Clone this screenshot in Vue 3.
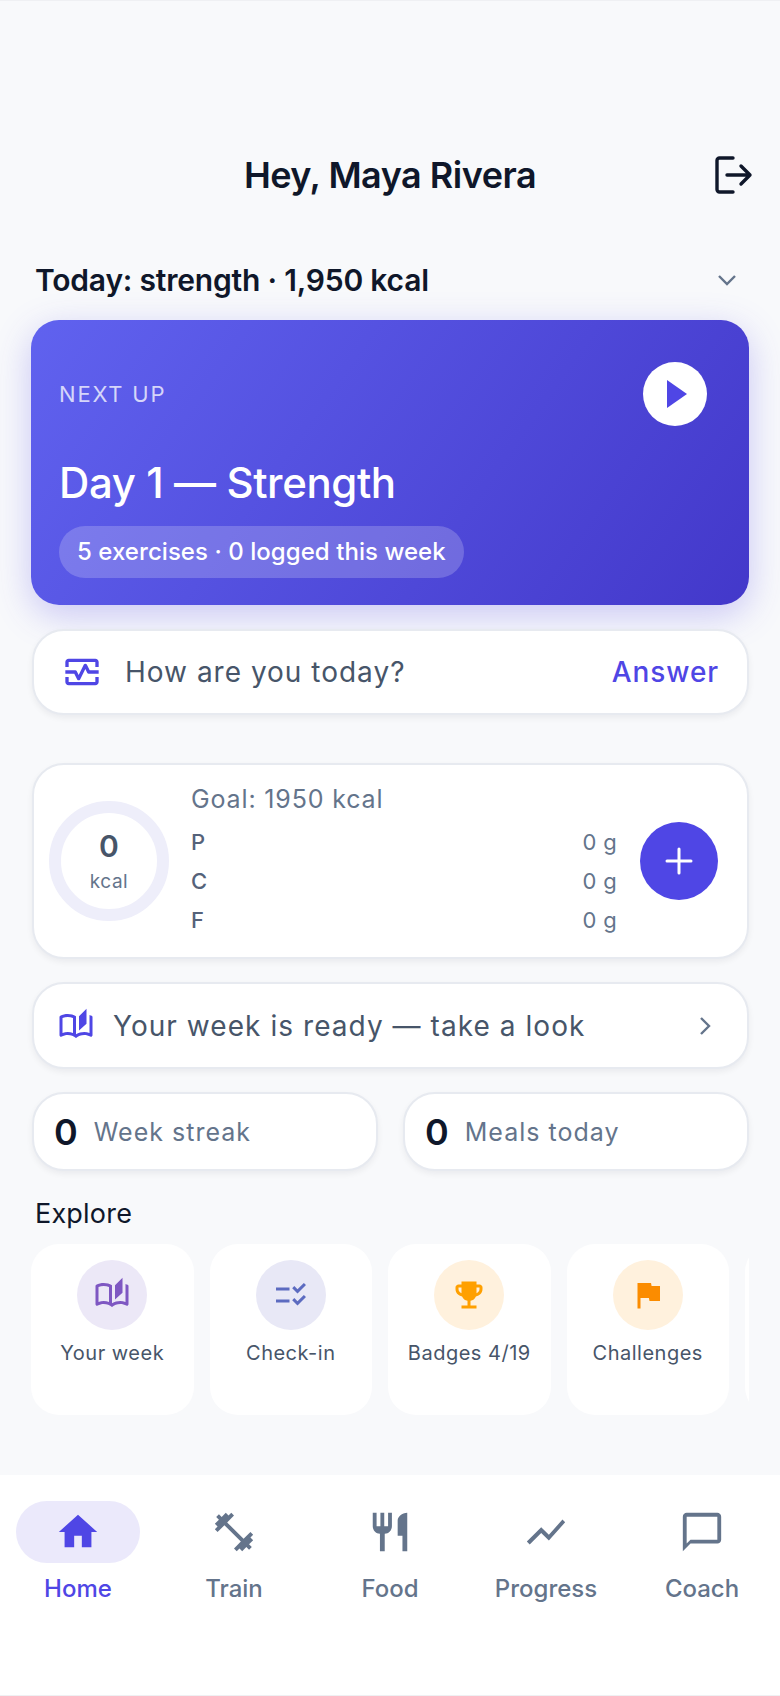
<template>
  <div class="page">
    <main class="main">
      <header class="top">
        <span></span>
        <h1 class="hello">Hey, Maya Rivera</h1>
        <button class="logout" aria-label="Log out">
          <svg viewBox="0 0 40 40" width="40" height="40" fill="none" stroke="#0f172a" stroke-width="3.4" stroke-linecap="round" stroke-linejoin="round">
            <path d="M20 3H6.5A2.5 2.5 0 0 0 4 5.500V34.500A2.500 2.500 0 0 0 6.500 37H20" />
            <path d="M14 20H37M28 11l9 9-9 9" />
          </svg>
        </button>
      </header>

      <div class="today">
        <span>Today: strength · 1,950 kcal</span>
        <svg viewBox="0 0 20 12" width="20" height="12" fill="none" stroke="#64748b" stroke-width="2.4"><path d="M2 2l8 8 8-8" /></svg>
      </div>

      <section class="hero">
        <div class="hero-top">
          <span class="next">NEXT UP</span>
          <span class="play"><svg viewBox="0 0 20 28" width="20" height="28"><path d="M0 0l20 14L0 28z" fill="#4f46e5" /></svg></span>
        </div>
        <h2 class="hero-title">Day 1 — Strength</h2>
        <span class="pill">5 exercises · 0 logged this week</span>
      </section>

      <div class="card checkin">
        <svg class="ic" viewBox="0 0 24 24" width="40" height="40" fill="#4f46e5">
          <path d="M20 4H4c-1.100 0-2 .9-2 2v3h2V6h16v3h2V6c0-1.100-.9-2-2-2zm0 14H4v-3H2v3c0 1.100.9 2 2 2h16c1.100 0 2-.9 2-2v-3h-2v3z" />
          <path d="M14.890 7.550c-.34-.68-1.450-.68-1.790 0L10 13.760l-1.110-2.210C8.720 11.210 8.380 11 8 11H2v2h5.380l1.720 3.450c.18.34.52.55.9.55s.72-.21.89-.55L14 10.240l1.110 2.210c.17.34.51.55.89.55h6v-2h-5.380l-1.730-3.450z" />
        </svg>
        <span class="ask">How are you today?</span>
        <span class="answer">Answer</span>
      </div>

      <div class="card food">
        <div class="ring">
          <b>0</b>
          <small>kcal</small>
        </div>
        <div class="macros">
          <div class="goal">Goal: 1950 kcal</div>
          <div v-for="m in macros" :key="m" class="macro">
            <span class="m-name">{{ m }}</span>
            <span>0 g</span>
          </div>
        </div>
        <button class="add" aria-label="Add">
          <svg viewBox="0 0 28 28" width="28" height="28" stroke="#fff" stroke-width="3" stroke-linecap="round"><path d="M14 2v24M2 14h24" /></svg>
        </button>
      </div>

      <div class="card week">
        <svg viewBox="0 0 24 24" width="36" height="36" fill="#4f46e5"><path :d="bookPath" /></svg>
        <span class="week-text">Your week is ready — take a look</span>
        <svg viewBox="0 0 12 20" width="12" height="20" fill="none" stroke="#64748b" stroke-width="2.400"><path d="M2 2l8 8-8 8" /></svg>
      </div>

      <div class="stats">
        <div class="card stat"><b>0</b><span>Week streak</span></div>
        <div class="card stat"><b>0</b><span>Meals today</span></div>
      </div>

      <h3 class="explore">Explore</h3>
      <div class="tiles">
        <div v-for="t in tiles" :key="t.label" class="tile">
          <span class="tile-ic" :style="{ background: t.bg }">
            <svg viewBox="0 0 24 24" width="36" height="36" :fill="t.color"><path :d="t.path" /></svg>
          </span>
          <span class="tile-label">{{ t.label }}</span>
        </div>
        <div class="tile"></div>
      </div>
    </main>

    <nav class="nav">
      <div v-for="(n, i) in navItems" :key="n.label" class="nav-item" :class="{ active: i === 0 }">
        <span class="nav-ic">
          <svg viewBox="0 0 24 24" width="46" height="46" fill="currentColor"><path :d="n.path" /></svg>
        </span>
        <span class="nav-label">{{ n.label }}</span>
      </div>
    </nav>
  </div>
</template>

<script setup>
const macros = ['P', 'C', 'F']

const bookPath = 'M22.470 5.200C22 4.960 21.510 4.760 21 4.590v12.030C19.860 16.210 18.690 16 17.500 16c-1.900 0-3.780.54-5.500 1.580V5.480C10.380 4.550 8.510 4 6.500 4 4.710 4 3.020 4.440 1.530 5.200 1.200 5.360 1 5.710 1 6.080v12.080c0 .76.81 1.230 1.480.87C3.690 18.400 5.050 18 6.500 18c2.070 0 3.980.82 5.500 2 1.520-1.180 3.430-2 5.500-2 1.450 0 2.810.4 4.020 1.040.67.36 1.480-.11 1.480-.87V6.080c0-.37-.2-.72-.53-.88zM10 16.620C8.860 16.210 7.690 16 6.500 16s-2.360.21-3.500.62V6.710C4.110 6.240 5.280 6 6.500 6c1.200 0 2.390.25 3.500.72v9.900zM19 .5l-5 5V15l5-4.500V.5z'

const tiles = [
  { label: 'Your week', bg: '#ece8f7', color: '#7e57c2', path: bookPath },
  { label: 'Check-in', bg: '#e8e8f6', color: '#5c6bc0', path: 'M11 7H2v2h9V7zm0 8H2v2h9v-2zm5.340-4l-3.540-3.540 1.410-1.410 2.120 2.120 4.240-4.240L22 5.340 16.340 11zm0 8l-3.540-3.540 1.410-1.410 2.120 2.120 4.240-4.240L22 13.340 16.340 19z' },
  { label: 'Badges 4/19', bg: '#fff1dd', color: '#ffa000', path: 'M19 5h-2V3H7v2H5c-1.100 0-2 .9-2 2v1c0 2.550 1.920 4.630 4.390 4.940.63 1.500 1.980 2.630 3.610 2.960V19H7v2h10v-2h-4v-3.100c1.630-.33 2.980-1.460 3.610-2.960C19.080 12.630 21 10.550 21 8V7c0-1.100-.9-2-2-2zM5 8V7h2v3.820C5.840 10.400 5 9.300 5 8zm14 0c0 1.300-.84 2.400-2 2.820V7h2v1z' },
  { label: 'Challenges', bg: '#fff1dd', color: '#fb8c00', path: 'M14.400 6L14 4H5v17h2v-7h5.600l.4 2h7V6z' },
]

const navItems = [
  { label: 'Home', path: 'M10 20v-6h4v6h5v-8h3L12 3 2 12h3v8z' },
  { label: 'Train', path: 'M20.570 14.860L22 13.430 20.570 12 17 15.570 8.430 7 12 3.430 10.570 2 9.140 3.430 7.710 2 5.570 4.140 4.140 2.710 2.710 4.140l1.430 1.430L2 7.710l1.430 1.430L2 10.570 3.430 12 7 8.430 15.570 17 12 20.570 13.430 22l1.430-1.430L16.290 22l2.140-2.140 1.430 1.430 1.430-1.430-1.430-1.430L22 16.290z' },
  { label: 'Food', path: 'M11 9H9V2H7v7H5V2H3v7c0 2.120 1.660 3.840 3.750 3.970V22h2.500v-9.030C11.340 12.840 13 11.120 13 9V2h-2v7zm5-3v8h2.500v8H21V2c-2.760 0-5 2.240-5 4z' },
  { label: 'Progress', path: 'M3.500 18.490l6-6.010 4 4L22 6.920l-1.410-1.410-7.090 7.970-4-4L2 16.990z' },
  { label: 'Coach', path: 'M20 2H4c-1.100 0-2 .9-2 2v18l4-4h14c1.100 0 2-.9 2-2V4c0-1.100-.9-2-2-2zm0 14H6l-2 2V4h16v12z' },
]
</script>

<style>
html, body { margin: 0; background: #f8f9fb; }
</style>

<style scoped>
* { box-sizing: border-box; }

.page {
  width: 780px;
  height: 1696px;
  display: flex;
  flex-direction: column;
  overflow: hidden;
  background: #f8f9fb;
  border-top: 1px solid #eff0f3;
  font-family: Inter, "Liberation Sans", sans-serif;
  color: #0f172a;
}

.main {
  flex: 1;
  padding: 0 31px;
}

.top {
  display: grid;
  grid-template-columns: 1fr auto 1fr;
  align-items: center;
  padding: 150px 0 0;
  height: 198px;
}
.hello {
  margin: 0;
  font-size: 36px;
  font-weight: 600;
  line-height: 48px;
  letter-spacing: -0.5px;
}
.logout {
  justify-self: end;
  background: none;
  border: 0;
  padding: 0;
  height: 40px;
  margin-right: -4px;
}

.today {
  display: flex;
  justify-content: space-between;
  align-items: center;
  padding: 61px 12px 0 4px;
  font-size: 30px;
  font-weight: 600;
  line-height: 40px;
  letter-spacing: -0.2px;
}

.hero {
  margin-top: 20px;
  height: 285px;
  border-radius: 28px;
  padding: 42px 42px 0 28px;
  background: linear-gradient(125deg, #6062ef 0%, #4338ca 100%);
  box-shadow: 0 10px 36px rgba(79, 70, 229, 0.28);
  color: #fff;
}
.hero-top {
  display: flex;
  justify-content: space-between;
  align-items: center;
}
.next {
  font-size: 22px;
  letter-spacing: 1.8px;
  color: rgba(255, 255, 255, 0.75);
}
.play {
  width: 64px;
  height: 64px;
  border-radius: 50%;
  background: #fff;
  display: flex;
  align-items: center;
  justify-content: center;
  padding-left: 4px;
}
.hero-title {
  margin: 29px 0 0;
  font-size: 42px;
  font-weight: 500;
  line-height: 56px;
  letter-spacing: -0.4px;
}
.pill {
  display: inline-block;
  margin-top: 15px;
  padding: 0 18px;
  height: 52px;
  line-height: 52px;
  border-radius: 26px;
  background: rgba(255, 255, 255, 0.2);
  font-size: 24px;
  font-weight: 500;
  letter-spacing: 0.05px;
}

.card {
  background: #fff;
  border: 2px solid #e7eaf0;
  border-radius: 32px;
  box-shadow: 0 3px 6px rgba(15, 23, 42, 0.06);
  margin-left: 1px;
  margin-right: 0;
}

.checkin {
  margin-top: 24px;
  height: 86px;
  display: flex;
  align-items: center;
  padding: 0 28px 0 28px;
}
.ask {
  margin-left: 23px;
  flex: 1;
  font-size: 28px;
  letter-spacing: 1px;
  color: #475569;
}
.answer {
  font-size: 28px;
  font-weight: 500;
  letter-spacing: 0.9px;
  color: #4f46e5;
}

.food {
  margin-top: 48px;
  height: 196px;
  display: flex;
  align-items: center;
  padding: 0 29px 0 15px;
}
.ring {
  width: 120px;
  height: 120px;
  flex: none;
  border: 12px solid #eeeefa;
  border-radius: 50%;
  display: flex;
  flex-direction: column;
  align-items: center;
  justify-content: center;
  color: #475569;
}
.ring b {
  font-size: 30px;
  font-weight: 600;
  line-height: 38px;
}
.ring small {
  margin-top: 3px;
  font-size: 19px;
  line-height: 28px;
  letter-spacing: 0.5px;
  color: #64748b;
}
.macros {
  flex: 1;
  margin-left: 22px;
}
.goal {
  margin-bottom: 7px;
  font-size: 25px;
  letter-spacing: 0.85px;
  color: #64748b;
  line-height: 34px;
}
.macro {
  display: flex;
  justify-content: space-between;
  height: 39px;
  line-height: 39px;
  font-size: 22px;
  letter-spacing: 0.3px;
  color: #64748b;
}
.m-name {
  font-weight: 500;
  color: #55627a;
}
.add {
  flex: none;
  width: 78px;
  height: 78px;
  margin-left: 23px;
  border: 0;
  border-radius: 50%;
  background: #4f46e5;
  display: flex;
  align-items: center;
  justify-content: center;
}

.week {
  margin-top: 23px;
  height: 87px;
  display: flex;
  align-items: center;
  padding: 0 36px 0 24px;
}
.week-text {
  flex: 1;
  margin-left: 19px;
  font-size: 28px;
  letter-spacing: 1.05px;
  color: #475569;
}

.stats {
  display: flex;
  gap: 25px;
  margin: 23px 0 0 1px;
}
.stat {
  flex: 1;
  margin: 0;
  height: 79px;
  display: flex;
  align-items: center;
  padding: 0 20px;
}
.stat b {
  font-size: 36px;
  font-weight: 600;
}
.stat span {
  margin-left: 16px;
  font-size: 25px;
  letter-spacing: 1px;
  color: #64748b;
}

.explore {
  margin: 25px 0 0 4px;
  font-size: 27px;
  font-weight: 400;
  line-height: 36px;
  letter-spacing: 0.2px;
}

.tiles {
  display: flex;
  gap: 16px;
  margin-top: 12px;
  overflow: hidden;
}
.tile {
  flex: none;
  width: 162.5px;
  height: 171px;
  border-radius: 28px;
  background: #fff;
  display: flex;
  flex-direction: column;
  align-items: center;
  padding-top: 16px;
}
.tile-ic {
  width: 70px;
  height: 70px;
  border-radius: 50%;
  display: flex;
  align-items: center;
  justify-content: center;
}
.tile-label {
  margin-top: 9px;
  font-size: 20px;
  line-height: 28px;
  letter-spacing: 0.5px;
  color: #475569;
}

.nav {
  height: 221px;
  flex: none;
  background: #fff;
  display: grid;
  grid-template-columns: repeat(5, 1fr);
  padding-top: 26px;
  align-items: start;
  border-bottom: 1px solid #eff0f3;
}
.nav-item {
  display: flex;
  flex-direction: column;
  align-items: center;
  color: #64748b;
}
.nav-ic {
  width: 124px;
  height: 62px;
  border-radius: 31px;
  display: flex;
  align-items: center;
  justify-content: center;
}
.nav-item.active { color: #4f46e5; }
.nav-item.active .nav-ic { background: #ebe9fb; }
.nav-label {
  margin-top: 10px;
  font-size: 24px;
  font-weight: 500;
  line-height: 32px;
}
</style>
